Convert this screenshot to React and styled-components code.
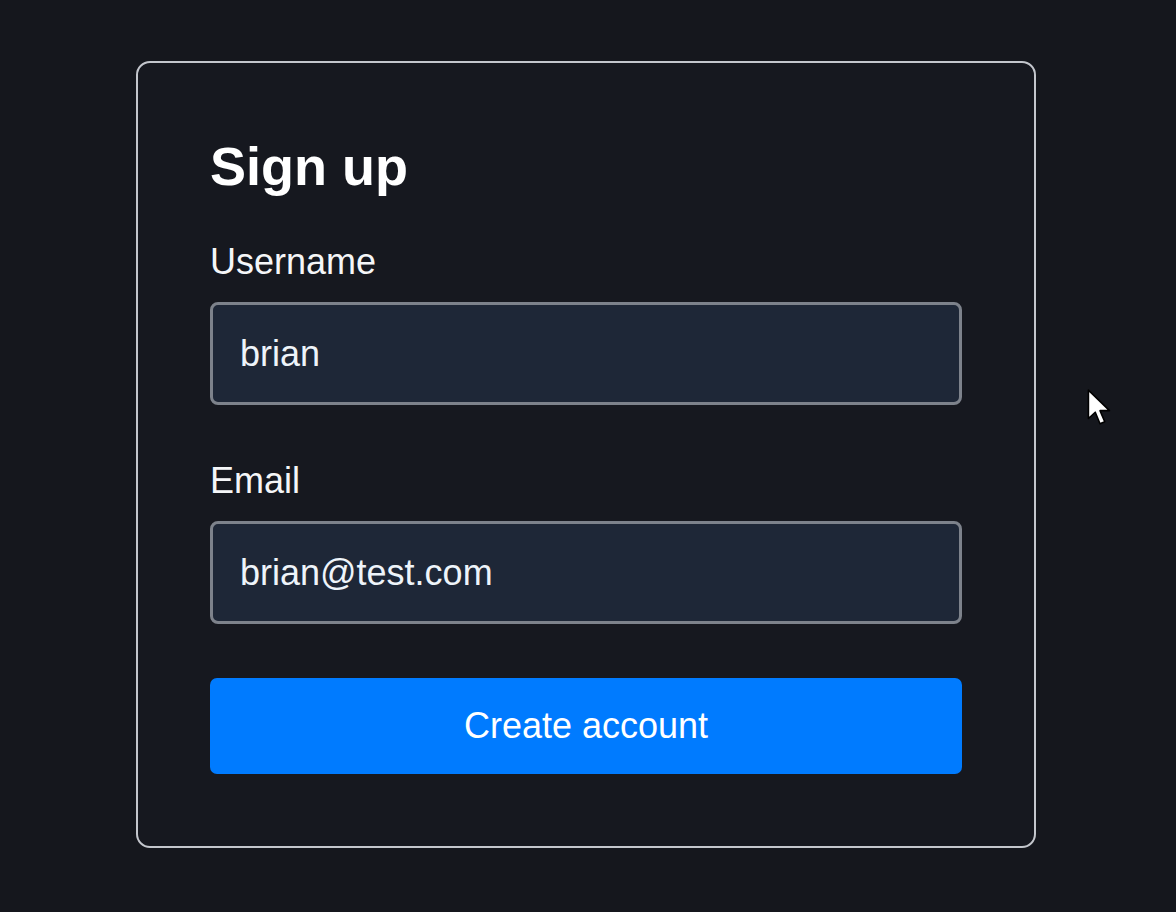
import React from "react";
import styled, { createGlobalStyle } from "styled-components";

const Global = createGlobalStyle`
  html, body {
    margin: 0;
    padding: 0;
    background: #15171d;
  }
  body {
    font-family: "Liberation Sans", Arial, sans-serif;
    color: #ffffff;
  }
`;

const Page = styled.div`
  position: relative;
  width: 1176px;
  height: 912px;
  box-sizing: border-box;
  padding: 61px 0 0 136px;
  background: #15171d;
  overflow: hidden;
`;

const Card = styled.form`
  width: 900px;
  box-sizing: border-box;
  border: 2px solid #c3c6cc;
  border-radius: 14px;
  background: #16181f;
  padding: 76px 72px 72px 72px;
  display: flex;
  flex-direction: column;
`;

const Title = styled.h1`
  margin: 0 0 50px;
  font-size: 54px;
  line-height: 55px;
  font-weight: 700;
  color: #ffffff;
`;

const Field = styled.label`
  display: flex;
  flex-direction: column;
  gap: 22px;
  margin-bottom: ${(p) => p.$gapAfter}px;
`;

const LabelText = styled.span`
  font-size: 36px;
  line-height: 36px;
  color: #f5f6f8;
`;

const Input = styled.input`
  box-sizing: border-box;
  width: 752px;
  height: 103px;
  margin: 0;
  padding: 0 27px;
  border: 3px solid #7d828b;
  border-radius: 8px;
  background: #1e2737;
  color: #eef4fa;
  font-family: "Liberation Sans", Arial, sans-serif;
  font-size: 36px;
  outline: none;
`;

const Button = styled.button`
  box-sizing: border-box;
  width: 752px;
  height: 96px;
  margin: 0;
  border: none;
  border-radius: 7px;
  background: #007bff;
  color: #ffffff;
  font-family: "Liberation Sans", Arial, sans-serif;
  font-size: 36px;
  cursor: pointer;
`;

const Cursor = styled.svg`
  position: absolute;
  left: 1086px;
  top: 388px;
`;

export default function App() {
  return (
    <>
      <Global />
      <Page>
        <Card onSubmit={(e) => e.preventDefault()}>
          <Title>Sign up</Title>
          <Field $gapAfter={58}>
            <LabelText>Username</LabelText>
            <Input type="text" defaultValue="brian" />
          </Field>
          <Field $gapAfter={54}>
            <LabelText>Email</LabelText>
            <Input type="email" defaultValue="brian@test.com" />
          </Field>
          <Button type="submit">Create account</Button>
        </Card>
        <Cursor width="28" height="40" viewBox="0 0 26 38">
          <path
            d="M2 2 L2 29 L8.5 23 L13 34 L17.5 32 L13 21.5 L22 21.5 Z"
            fill="#ffffff"
            stroke="#000000"
            strokeWidth="1.5"
            strokeLinejoin="round"
          />
        </Cursor>
      </Page>
    </>
  );
}
